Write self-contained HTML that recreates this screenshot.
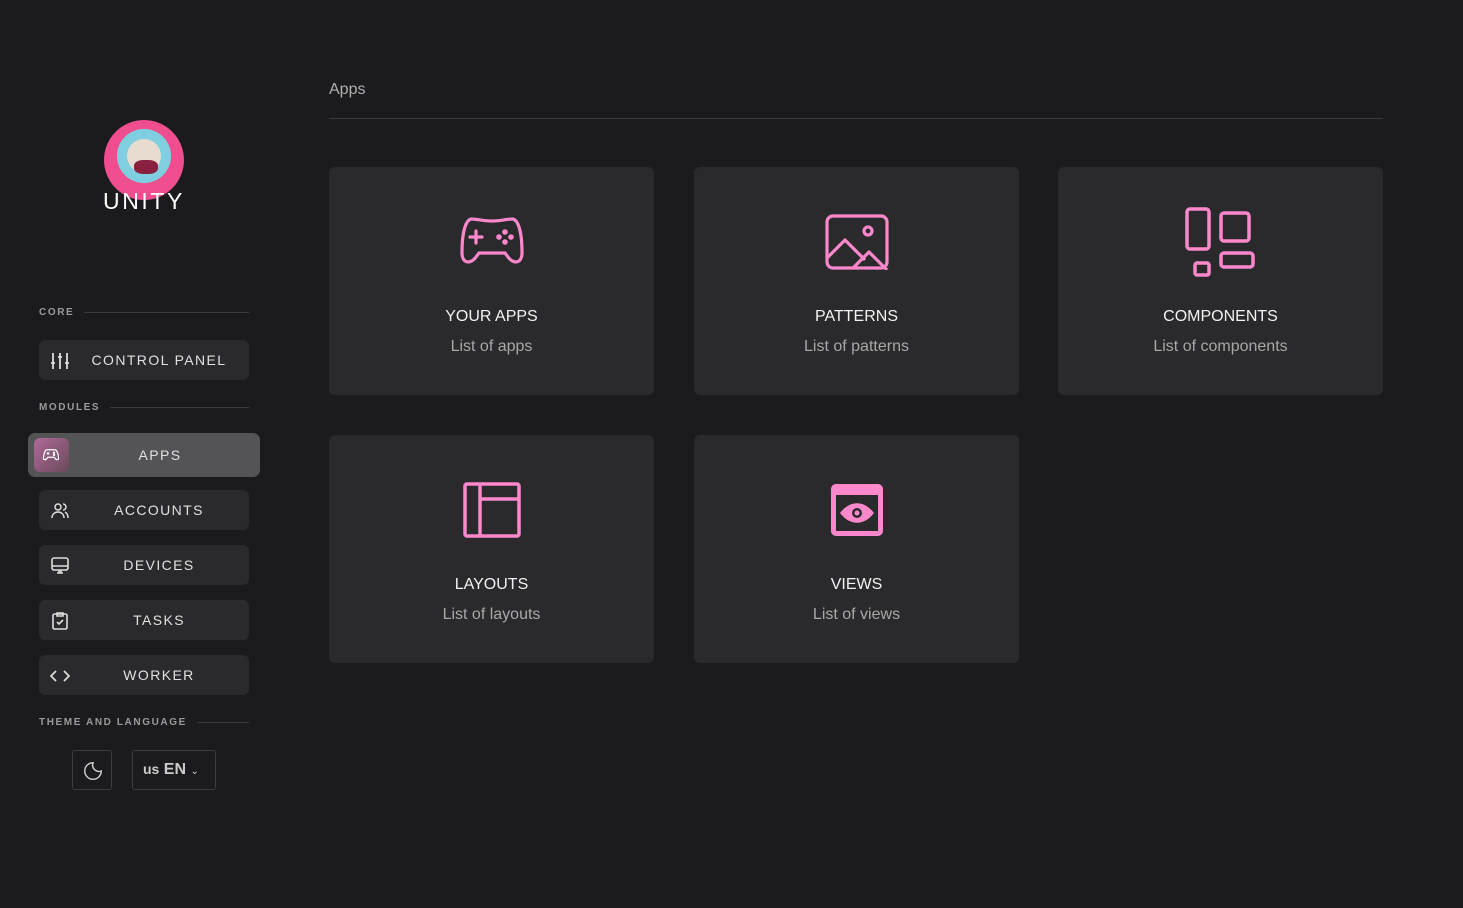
<!DOCTYPE html>
<html><head><meta charset="utf-8"><style>
*{box-sizing:border-box;margin:0;padding:0}
body{width:1463px;height:908px;background:#1b1b1d;font-family:"Liberation Sans",sans-serif;position:relative;overflow:hidden;color:#e6e6e6}
.abs{position:absolute}
.sec{position:absolute;left:39px;width:210px;font-size:10px;font-weight:bold;letter-spacing:1.6px;color:#9a9a9a;display:flex;align-items:center}
.sec:after{content:"";flex:1;height:1px;background:#3a3a3c;margin-left:10px}
.btn{position:absolute;left:39px;width:210px;height:40px;background:#2a2a2c;border-radius:6px;font-size:14px;letter-spacing:1.4px;color:#e0e0e0;display:flex;align-items:center;justify-content:center;padding-left:30px}
.btn svg{position:absolute;left:11px;top:11px}
.card{position:absolute;width:325px;height:228px;background:#2a2a2c;border-radius:6px;text-align:center}
.card svg{position:absolute;left:50%;transform:translateX(-50%)}
.t{position:absolute;left:0;right:0;top:141px;font-size:16px;color:#f2f2f2}
.s{position:absolute;left:0;right:0;top:171px;font-size:16px;color:#a8a8a8}
</style></head><body>
<div class="abs" style="left:104px;top:120px;width:80px;height:80px;border-radius:50%;background:radial-gradient(circle at 50% 45%,#e8dcd0 0 28%,#7fcfe0 29% 45%,#f04e8f 46%);overflow:hidden">
<div class="abs" style="left:30px;top:40px;width:24px;height:14px;background:#8a2040;border-radius:40%"></div></div>
<div class="abs" style="left:103px;top:188px;font-size:23px;color:#fff;letter-spacing:2.6px">UNITY</div>

<div class="sec" style="top:307px">CORE</div>
<div class="btn" style="top:340px">
<svg width="20" height="20" viewBox="0 0 20 20" fill="none" stroke="#ddd" stroke-width="1.8"><path d="M3 2v16M10 2v16M17 2v16M1 12h4M8 6h4M15 12h4"/></svg>CONTROL PANEL</div>
<div class="sec" style="top:402px">MODULES</div>
<div class="btn" style="left:28px;width:232px;height:44px;top:433px;background:#545456;border-radius:7px;padding-left:32px">
<div class="abs" style="left:6px;top:5px;width:35px;height:34px;border-radius:6px;background:linear-gradient(135deg,#b06a9a,#6a4a5a)"></div>
<svg width="22" height="18" viewBox="0 0 24 24" fill="none" stroke="#fff" stroke-width="1.6" style="left:12px;top:13px"><path d="M7 5h10c3 0 5 6 5 11 0 3-3 3-5 0l-1-1H8l-1 1c-2 3-5 3-5 0 0-5 2-11 5-11zM6 10h4M8 8v4"/><circle cx="16" cy="9" r=".8"/><circle cx="16" cy="12" r=".8"/></svg>APPS</div>
<div class="btn" style="top:490px"><svg width="20" height="20" viewBox="0 0 20 20" fill="none" stroke="#ddd" stroke-width="1.5"><circle cx="8" cy="6" r="3"/><path d="M2 17c0-4 3-6 6-6s6 2 6 6M13 3a3 3 0 010 6M15 11c2 1 3 3 3 6"/></svg>ACCOUNTS</div>
<div class="btn" style="top:545px"><svg width="20" height="20" viewBox="0 0 20 20" fill="none" stroke="#ddd" stroke-width="1.6"><rect x="2" y="2" width="16" height="12" rx="2"/><path d="M2 10h16M7 17h6M9 14v3M11 14v3"/></svg>DEVICES</div>
<div class="btn" style="top:600px"><svg width="20" height="20" viewBox="0 0 20 20" fill="none" stroke="#ddd" stroke-width="1.6"><rect x="3" y="3" width="14" height="15" rx="1.5"/><path d="M7 2h6v3H7zM7 11l2 2 4-4"/></svg>TASKS</div>
<div class="btn" style="top:655px"><svg width="20" height="20" viewBox="0 0 20 20" fill="none" stroke="#ddd" stroke-width="1.8"><path d="M6 5l-5 5 5 5M14 5l5 5-5 5"/></svg>WORKER</div>
<div class="sec" style="top:717px">THEME AND LANGUAGE</div>
<div class="abs" style="left:72px;top:750px;width:40px;height:40px;border:1px solid #3c3c3e;border-radius:3px">
<svg class="abs" style="left:9px;top:9px" width="22" height="22" viewBox="0 0 24 24" fill="none" stroke="#ccc" stroke-width="1.6"><path d="M12 3a9 9 0 109 9A7 7 0 0112 3z"/></svg></div>
<div class="abs" style="left:132px;top:750px;width:84px;height:40px;border:1px solid #3c3c3e;border-radius:3px;color:#ccc;font-weight:bold;font-size:16px;padding:10px 0 0 10px"><span style="font-size:14px">us</span> EN <span style="font-size:10px;font-weight:normal">&#8964;</span></div>

<div class="abs" style="left:329px;top:81px;font-size:16px;color:#b0b0b0">Apps</div>
<div class="abs" style="left:329px;top:118px;width:1054px;height:1px;background:#3a3a3c"></div>

<div class="card" style="left:329px;top:167px">
<svg style="top:48px" width="68" height="52" viewBox="0 0 68 52" fill="none" stroke="#ff88cc" stroke-width="3.2" stroke-linecap="round"><path d="M14 4c6 0 10 2 20 2s14-2 20-2c6 0 10 12 10 34 0 10-8 12-14 4l-3-4H21l-3 4C12 50 4 48 4 38 4 16 8 4 14 4z"/><path d="M12 22h12M18 16v12"/><circle cx="41" cy="22" r="1.2" fill="#ff88cc"/><circle cx="47" cy="17" r="1.2" fill="#ff88cc"/><circle cx="47" cy="27" r="1.2" fill="#ff88cc"/><circle cx="53" cy="22" r="1.2" fill="#ff88cc"/></svg>
<div class="t">YOUR APPS</div><div class="s">List of apps</div></div>
<div class="card" style="left:694px;top:167px">
<svg style="top:47px" width="64" height="56" viewBox="0 0 64 56" fill="none" stroke="#ff88cc" stroke-width="3.2" stroke-linejoin="round"><rect x="2" y="2" width="60" height="52" rx="6"/><circle cx="43" cy="17" r="4"/><path d="M2 44l18-18 20 20M28 54l16-16 18 18"/></svg>
<div class="t">PATTERNS</div><div class="s">List of patterns</div></div>
<div class="card" style="left:1058px;top:167px">
<svg style="top:40px" width="72" height="70" viewBox="0 0 72 70" fill="none" stroke="#ff88cc" stroke-width="3.5"><rect x="2" y="2" width="22" height="40" rx="3"/><rect x="36" y="6" width="28" height="28" rx="3"/><rect x="10" y="56" width="14" height="12" rx="2"/><rect x="36" y="46" width="32" height="14" rx="3"/></svg>
<div class="t">COMPONENTS</div><div class="s">List of components</div></div>
<div class="card" style="left:329px;top:435px">
<svg style="top:47px" width="58" height="56" viewBox="0 0 58 56" fill="none" stroke="#ff88cc" stroke-width="3.5"><rect x="2" y="2" width="54" height="52" rx="2"/><path d="M17 2v52M17 17h39"/></svg>
<div class="t">LAYOUTS</div><div class="s">List of layouts</div></div>
<div class="card" style="left:694px;top:435px">
<svg style="top:48px" width="54" height="54" viewBox="0 0 54 54"><rect x="1" y="1" width="52" height="52" rx="5" fill="#ff88cc"/><rect x="6" y="12" width="42" height="36" fill="#2a2a2c"/><path d="M10 30c10-13 24-13 34 0-10 13-24 13-34 0z" fill="#ff88cc"/><circle cx="27" cy="30" r="5" fill="#2a2a2c"/><circle cx="27" cy="30" r="2.5" fill="#ff88cc"/></svg>
<div class="t">VIEWS</div><div class="s">List of views</div></div>
</body></html>
